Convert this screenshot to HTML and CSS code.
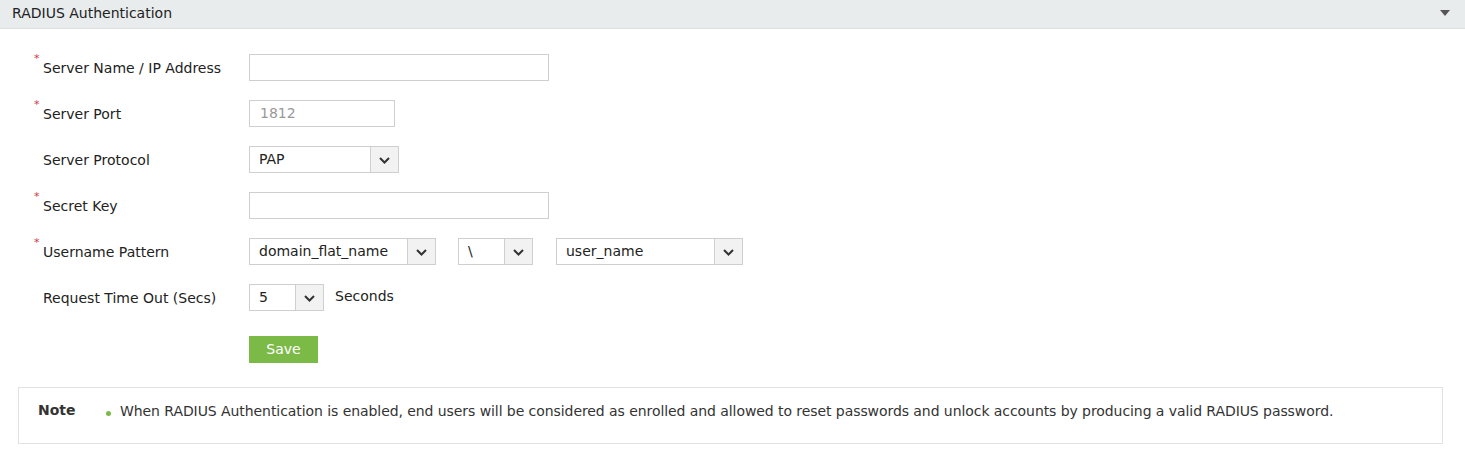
FILE: index.html
```html
<!DOCTYPE html>
<html>
<head>
<meta charset="utf-8">
<link rel="stylesheet" href="styles.css">
</head>
<body>
<div class="panel">
  <div class="panel-head">
    <span class="panel-title">RADIUS Authentication</span>
    <span class="caret"></span>
  </div>
  <div class="form">
    <div class="row">
      <div class="label"><span class="req">*</span>Server Name / IP Address</div>
      <div class="field"><div class="input w300"></div></div>
    </div>
    <div class="row">
      <div class="label"><span class="req">*</span>Server Port</div>
      <div class="field"><div class="input w146 placeholder">1812</div></div>
    </div>
    <div class="row">
      <div class="label"><span class="req"></span>Server Protocol</div>
      <div class="field">
        <div class="select w150"><span class="sel-text">PAP</span><span class="sel-btn"><svg width="11" height="7" viewBox="0 0 11 7"><path d="M1 1l4.5 4.5L10 1" fill="none" stroke="#333" stroke-width="2"/></svg></span></div>
      </div>
    </div>
    <div class="row">
      <div class="label"><span class="req">*</span>Secret Key</div>
      <div class="field"><div class="input w300"></div></div>
    </div>
    <div class="row">
      <div class="label"><span class="req">*</span>Username Pattern</div>
      <div class="field">
        <div class="select w187"><span class="sel-text">domain_flat_name</span><span class="sel-btn"><svg width="11" height="7" viewBox="0 0 11 7"><path d="M1 1l4.5 4.5L10 1" fill="none" stroke="#333" stroke-width="2"/></svg></span></div>
        <div class="select w75 sep-a"><span class="sel-text">\</span><span class="sel-btn"><svg width="11" height="7" viewBox="0 0 11 7"><path d="M1 1l4.5 4.5L10 1" fill="none" stroke="#333" stroke-width="2"/></svg></span></div>
        <div class="select w187 sep-b"><span class="sel-text">user_name</span><span class="sel-btn"><svg width="11" height="7" viewBox="0 0 11 7"><path d="M1 1l4.5 4.5L10 1" fill="none" stroke="#333" stroke-width="2"/></svg></span></div>
      </div>
    </div>
    <div class="row">
      <div class="label"><span class="req"></span>Request Time Out (Secs)</div>
      <div class="field">
        <div class="select w75"><span class="sel-text">5</span><span class="sel-btn"><svg width="11" height="7" viewBox="0 0 11 7"><path d="M1 1l4.5 4.5L10 1" fill="none" stroke="#333" stroke-width="2"/></svg></span></div>
        <span class="unit">Seconds</span>
      </div>
    </div>
    <div class="row">
      <div class="label"></div>
      <div class="field"><button class="save">Save</button></div>
    </div>
  </div>
  <div class="note">
    <div class="note-title">Note</div>
    <ul class="note-list">
      <li>When RADIUS Authentication is enabled, end users will be considered as enrolled and allowed to reset passwords and unlock accounts by producing a valid RADIUS password.</li>
    </ul>
  </div>
</div>
</body>
</html>
```
FILE: styles.css
```css
* { box-sizing: border-box; }
html, body { margin: 0; padding: 0; background: #fff; }
body {
  font-family: "DejaVu Sans", Verdana, sans-serif;
  font-size: 14px;
  color: #222;
}
.panel-head {
  height: 29px;
  background: #e9eced;
  border-bottom: 1px solid #dcdfe0;
  display: flex;
  align-items: center;
  justify-content: space-between;
  padding: 0 12px 2px 12px;
}
.panel-title { font-size: 14px; color: #222; }
.caret {
  width: 0; height: 0;
  border-left: 5px solid transparent;
  border-right: 5px solid transparent;
  border-top: 6px solid #555;
  margin-right: 3px;
}
.form {
  padding-top: 25px;
  display: flex;
  flex-direction: column;
  gap: 19px;
}
.row {
  display: flex;
  align-items: center;
  height: 27px;
}
.label {
  width: 249px;
  padding-left: 34px;
  font-size: 14px;
  display: flex;
  align-items: center;
}
.req {
  display: inline-block;
  width: 9px;
  color: #d0383f;
  font-size: 11px;
  align-self: flex-start;
  margin-top: -6px;
  height: 10px;
  line-height: 10px;
}
.field {
  display: flex;
  align-items: center;
}
.sep-a { margin-left: 22px; }
.sep-b { margin-left: 23px; }
.input {
  height: 27px;
  border: 1px solid #cfcfcf;
  background: #fff;
  padding: 0 10px;
  line-height: 25px;
  font-size: 14px;
}
.placeholder { color: #999; }
.w300 { width: 300px; }
.w146 { width: 146px; }
.w150 { width: 150px; }
.w187 { width: 187px; }
.w75 { width: 75px; }
.select {
  height: 27px;
  border: 1px solid #cfcfcf;
  display: flex;
  background: #fff;
}
.sel-text {
  flex: 1;
  padding-left: 9px;
  line-height: 25px;
  font-size: 14px;
  white-space: nowrap;
  overflow: hidden;
}
.sel-btn {
  width: 28px;
  border-left: 1px solid #cfcfcf;
  background: #f2f2f2;
  display: flex;
  align-items: center;
  justify-content: center;
  padding-top: 2px;
}
.unit {
  margin-left: 11px;
  font-size: 14px;
  margin-top: -3px;
}
.save {
  height: 27px;
  width: 69px;
  border: 0;
  background: #7cba48;
  color: #fff;
  font-family: "DejaVu Sans", Verdana, sans-serif;
  font-size: 14px;
  padding: 0;
  margin-top: 11px;
}
.note {
  margin: 30px 22px 0 18px;
  border: 1px solid #e2e2e2;
  height: 57px;
  display: flex;
  align-items: flex-start;
  padding: 14px 0 0 19px;
}
.note-title {
  font-weight: bold;
  font-size: 14px;
  width: 67px;
  color: #333;
}
.note-list {
  margin: 0;
  padding: 0;
  list-style: none;
}
.note-list li {
  position: relative;
  padding-left: 15px;
  font-size: 14px;
  margin-top: 1px;
  color: #333;
  letter-spacing: -0.07px;
}
.note-list li::before {
  content: "";
  position: absolute;
  left: 1px;
  top: 8px;
  width: 5px;
  height: 5px;
  border-radius: 50%;
  background: #7cba48;
}
```
